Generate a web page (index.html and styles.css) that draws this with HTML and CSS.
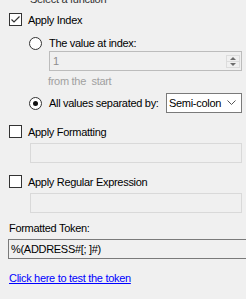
FILE: index.html
```html
<!DOCTYPE html>
<html lang="en">
<head>
    <meta charset="UTF-8">
    <title>Select a function</title>
    <link rel="stylesheet" href="styles.css">
</head>
<body>
    <div class="title">Select a function</div>
    <div class="panel">
        <div class="check-row">
            <span class="checkbox checked">
                <svg width="11" height="11" viewBox="0 0 11 11"><path d="M1.5 5.5 L4 8 L9.5 2.5" fill="none" stroke="#333" stroke-width="1.2"/></svg>
            </span>
            <span>Apply Index</span>
        </div>

        <div class="sub">
            <div class="radio-row first">
                <span class="radio"></span>
                <span>The value at index:</span>
            </div>
            <div class="field numeric">
                <span class="value">1</span>
                <span class="spinner">
                    <span class="spin-up"></span>
                    <span class="spin-down"></span>
                </span>
            </div>
            <div class="hint">from the&nbsp; start</div>
            <div class="radio-row second">
                <span class="radio on"></span>
                <span>All values separated by:</span>
                <div class="select">
                    <span>Semi-colon</span>
                    <svg width="9" height="6" viewBox="0 0 9 6"><path d="M0.5 0.5 L4.5 4.5 L8.5 0.5" fill="none" stroke="#555" stroke-width="1"/></svg>
                </div>
            </div>
        </div>

        <div class="check-row gap">
            <span class="checkbox"></span>
            <span>Apply Formatting</span>
        </div>
        <div class="field disabled"></div>

        <div class="check-row gap">
            <span class="checkbox"></span>
            <span>Apply Regular Expression</span>
        </div>
        <div class="field disabled"></div>

        <div class="label">Formatted Token:</div>
        <div class="field token">%(ADDRESS#[; ]#)</div>

        <a class="link">Click here to test the token</a>
    </div>
</body>
</html>
```

FILE: styles.css
```css
body {
    margin: 0px;
    width: 246px;
    height: 299px;
    overflow: hidden;
    background-color: #f0f0f0;
    font-family: "Liberation Sans", Arial, sans-serif;
    font-size: 11px;
    letter-spacing: -0.3px;
    color: #000;
    white-space: nowrap;
}
.title{
    margin-top: -8px;
    height: 14px;
    line-height: 14px;
    padding-left: 30px;
    color: #333;
}
.panel{
    padding-left: 9px;
    display: flex;
    flex-direction: column;
}
.check-row{
    display: flex;
    align-items: center;
    gap: 6px;
    height: 19px;
    margin-top: 4px;
}
.check-row.gap{
    margin-top: 9px;
}
.checkbox{
    width: 11px;
    height: 11px;
    flex-shrink: 0;
    border: 1px solid #333;
    background-color: #fff;
    display: flex;
    align-items: center;
    justify-content: center;
}
.sub{
    padding-left: 20px;
    display: flex;
    flex-direction: column;
}
.radio-row{
    display: flex;
    align-items: center;
    gap: 7px;
}
.radio-row.first{
    height: 16px;
    margin-top: 6px;
}
.radio-row.second{
    height: 20px;
    margin-top: 5px;
}
.radio{
    width: 11px;
    height: 11px;
    flex-shrink: 0;
    border: 1px solid #333;
    border-radius: 50%;
    background-color: #fff;
    display: flex;
    align-items: center;
    justify-content: center;
}
.radio.on::after{
    content: "";
    width: 5px;
    height: 5px;
    border-radius: 50%;
    background-color: #111;
}
.field{
    height: 18px;
    border: 1px solid #d9d9d9;
    margin-top: 2px;
    width: 210px;
    margin-left: 21px;
    box-sizing: content-box;
}
.field.numeric{
    margin-top: 0px;
    margin-left: 20px;
    width: 191px;
    border-color: #bcbcbc;
    display: flex;
    align-items: center;
    justify-content: space-between;
    color: #8d8d8d;
}
.numeric .value{
    padding-left: 3px;
}
.spinner{
    width: 14px;
    height: 13px;
    margin-right: 1px;
    border: 1px solid #dcdcdc;
    box-sizing: border-box;
    display: flex;
    flex-direction: column;
}
.spin-up, .spin-down{
    flex: 1;
    display: flex;
    align-items: center;
    justify-content: center;
}
.spin-up{
    border-bottom: 1px solid #dcdcdc;
}
.spin-up::after{
    content: "";
    border-left: 3px solid transparent;
    border-right: 3px solid transparent;
    border-bottom: 3px solid #6d6d6d;
}
.spin-down::after{
    content: "";
    border-left: 3px solid transparent;
    border-right: 3px solid transparent;
    border-top: 3px solid #6d6d6d;
}
.hint{
    margin-top: 3px;
    margin-left: 19px;
    height: 14px;
    line-height: 14px;
    color: #a0a0a0;
}
.select{
    margin-left: auto;
    margin-right: 4px;
    width: 67px;
    flex-shrink: 0;
    height: 18px;
    border: 1px solid #7a7a7a;
    background-color: #fff;
    display: flex;
    align-items: center;
    justify-content: space-between;
    padding: 0px 5px 0px 2px;
    box-sizing: content-box;
}
.label{
    margin-top: 8px;
    height: 14px;
    line-height: 14px;
}
.field.token{
    margin: 4px 0px 0px -1px;
    width: 236px;
    border-color: #7a7a7a;
    border-right: none;
    line-height: 18px;
    padding-left: 2px;
}
.link{
    margin-top: 12px;
    height: 14px;
    line-height: 14px;
    color: #0000ff;
    text-decoration: underline;
    cursor: pointer;
    align-self: flex-start;
}
```
